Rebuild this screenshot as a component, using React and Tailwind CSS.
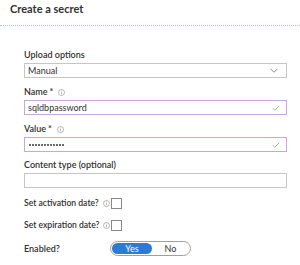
import React from 'react';

const InfoIcon = () => (
  <svg width="7" height="7" viewBox="0 0 14 14" className="shrink-0">
    <circle cx="7" cy="7" r="6" fill="none" stroke="#8a8886" strokeWidth="1.2" />
    <line x1="7" y1="6" x2="7" y2="10.5" stroke="#8a8886" strokeWidth="1.2" />
    <circle cx="7" cy="4" r="0.8" fill="#8a8886" />
  </svg>
);

const Check = () => (
  <svg width="8" height="6" viewBox="0 0 16 12" className="shrink-0">
    <path d="M1.5 6.5 L5.5 10.5 L14.5 1.5" fill="none" stroke="#86bf6a" strokeWidth="1.8" />
  </svg>
);

const Label = ({ children, required, info }) => (
  <div className="flex items-center h-[12px] text-[9px] font-semibold text-[#323130] whitespace-nowrap">
    <span>{children}</span>
    {required && <span className="ml-[2px]">*</span>}
    {info && <span className="ml-[5px] flex"><InfoIcon /></span>}
  </div>
);

const CheckRow = ({ children, className }) => (
  <div className={`flex items-center h-[12px] text-[8.6px] font-semibold whitespace-nowrap ${className}`}>
    <span>{children}</span>
    <span className="ml-[4px] flex"><InfoIcon /></span>
    <span className="ml-[1px] w-[11px] h-[11px] border border-[#8a8886]" />
  </div>
);

export default function App() {
  return (
    <div className="w-[300px] h-[265px] bg-white font-['Lato',sans-serif] text-[#323130]">
      <div className="h-[26px] pl-[10px] pt-[2px] border-b border-dotted border-[#9ed2e6]">
        <h1 className="text-[11px] leading-[14px] font-bold">Create a secret</h1>
      </div>

      <div className="pl-[24px] pr-[13px] pt-[23px]">
        {/* Upload options */}
        <Label>Upload options</Label>
        <div className="mt-[2px] h-[15px] border border-[#c8c6c4] flex items-center justify-between px-[3px] text-[9px]">
          <span>Manual</span>
          <svg width="8" height="5" viewBox="0 0 16 10" className="mr-[5px]">
            <path d="M1 1.5 L8 8.5 L15 1.5" fill="none" stroke="#605e5c" strokeWidth="1.4" />
          </svg>
        </div>

        {/* Name */}
        <div className="mt-[8px]">
          <Label required info>Name</Label>
          <div className="mt-[2px] h-[15px] border border-[#c9a6e0] flex items-center justify-between px-[3px] text-[9px]">
            <span>sqldbpassword</span>
            <span className="mr-[3px] flex"><Check /></span>
          </div>
        </div>

        {/* Value */}
        <div className="mt-[8px]">
          <Label required info>Value</Label>
          <div className="mt-[2px] h-[15px] border border-[#c9a6e0] flex items-center justify-between px-[3px]">
            <div className="flex gap-[1px] pl-[1px]">
              {Array.from({ length: 12 }).map((_, i) => (
                <span key={i} className="w-[2px] h-[2px] rounded-full bg-[#3b3a39]" />
              ))}
            </div>
            <span className="mr-[3px] flex"><Check /></span>
          </div>
        </div>

        {/* Content type */}
        <div className="mt-[7px]">
          <Label>Content type (optional)</Label>
          <div className="mt-[2px] h-[15px] border border-[#c8c6c4]" />
        </div>

        <CheckRow className="mt-[9px]">Set activation date?</CheckRow>
        <CheckRow className="mt-[10px]">Set expiration date?</CheckRow>

        {/* Enabled */}
        <div className="mt-[10px] flex items-center h-[15px] text-[9px]">
          <span className="w-[86px] shrink-0 font-semibold">Enabled?</span>
          <div className="w-[81px] h-[15px] rounded-full border border-[#a19f9d] flex items-center p-[1px]">
            <div className="w-[40px] h-full rounded-full bg-[#2f78d4] text-white flex items-center justify-center">Yes</div>
            <div className="flex-1 flex items-center justify-center">No</div>
          </div>
        </div>
      </div>
    </div>
  );
}
